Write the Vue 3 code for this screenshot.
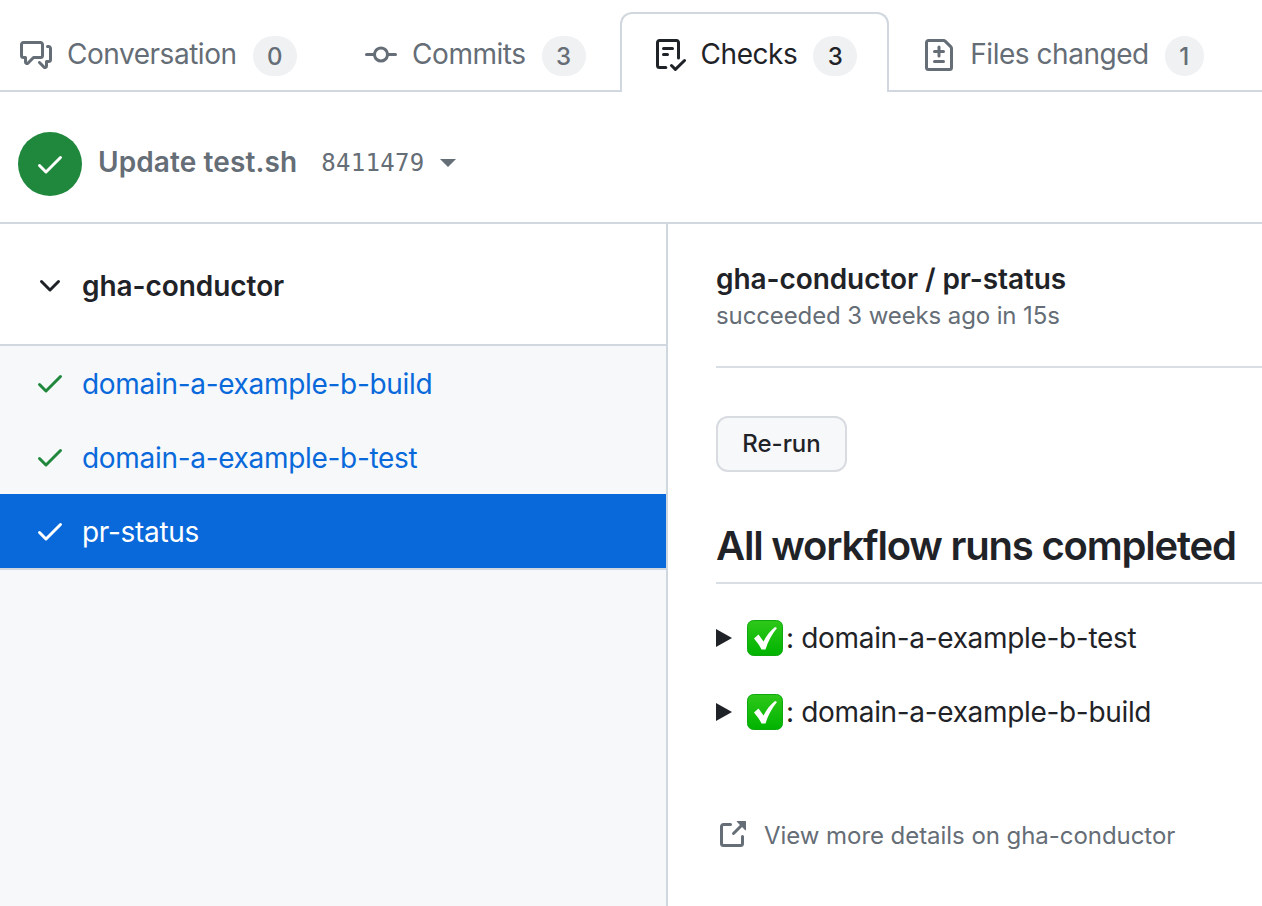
<script setup>
const icons = {
  comment: 'M1.75 1h8.5c.966 0 1.75.784 1.75 1.75v5.5A1.75 1.75 0 0 1 10.25 10H7.061l-2.574 2.573A1.458 1.458 0 0 1 2 11.543V10h-.25A1.75 1.75 0 0 1 0 8.25v-5.5C0 1.784.784 1 1.75 1ZM1.5 2.75v5.5c0 .138.112.25.25.25h1a.75.75 0 0 1 .75.75v2.19l2.72-2.72a.749.749 0 0 1 .53-.22h3.5a.25.25 0 0 0 .25-.25v-5.5a.25.25 0 0 0-.25-.25h-8.5a.25.25 0 0 0-.25.25Zm13 2a.25.25 0 0 0-.25-.25h-.5a.75.75 0 0 1 0-1.5h.5c.966 0 1.75.784 1.75 1.75v5.5A1.75 1.75 0 0 1 14.25 12H14v1.543a1.458 1.458 0 0 1-2.487 1.03L9.22 12.28a.749.749 0 0 1 .326-1.275.749.749 0 0 1 .734.215l2.22 2.22v-2.19a.75.75 0 0 1 .75-.75h1a.25.25 0 0 0 .25-.25Z',
  commit: 'M11.93 8.5a4.002 4.002 0 0 1-7.86 0H.75a.75.75 0 0 1 0-1.5h3.32a4.002 4.002 0 0 1 7.86 0h3.32a.75.75 0 0 1 0 1.5Zm-1.43-.75a2.5 2.5 0 1 0-5 0 2.5 2.5 0 0 0 5 0Z',
  checklist: 'M2.5 1.75v11.5c0 .138.112.25.25.25h3.17a.75.75 0 0 1 0 1.5H2.75A1.75 1.75 0 0 1 1 13.25V1.75C1 .784 1.784 0 2.75 0h8.5C12.216 0 13 .784 13 1.75v7.736a.75.75 0 0 1-1.5 0V1.75a.25.25 0 0 0-.25-.25h-8.5a.25.25 0 0 0-.25.25Zm13.274 9.537v-.001l-4.557 4.45a.75.75 0 0 1-1.055-.008l-1.943-1.95a.75.75 0 0 1 1.062-1.058l1.419 1.425 4.026-3.932a.75.75 0 1 1 1.048 1.074ZM4.75 4h4.5a.75.75 0 0 1 0 1.5h-4.5a.75.75 0 0 1 0-1.5ZM4 7.75A.75.75 0 0 1 4.75 7h2a.75.75 0 0 1 0 1.5h-2A.75.75 0 0 1 4 7.75Z',
  diff: 'M1 1.75C1 .784 1.784 0 2.75 0h7.586c.464 0 .909.184 1.237.513l2.914 2.914c.329.328.513.773.513 1.237v9.586A1.75 1.75 0 0 1 13.25 16H2.75A1.75 1.75 0 0 1 1 14.25Zm1.75-.25a.25.25 0 0 0-.25.25v12.5c0 .138.112.25.25.25h10.5a.25.25 0 0 0 .25-.25V4.664a.25.25 0 0 0-.073-.177l-2.914-2.914a.25.25 0 0 0-.177-.073ZM8 3.25a.75.75 0 0 1 .75.75v1.5h1.5a.75.75 0 0 1 0 1.5h-1.5v1.5a.75.75 0 0 1-1.5 0V7h-1.5a.75.75 0 0 1 0-1.5h1.5V4A.75.75 0 0 1 8 3.25Zm-3 8a.75.75 0 0 1 .75-.75h4.5a.75.75 0 0 1 0 1.5h-4.5a.75.75 0 0 1-.75-.75Z',
  check: 'M13.78 4.22a.75.75 0 0 1 0 1.06l-7.25 7.25a.75.75 0 0 1-1.06 0L2.22 9.28a.751.751 0 0 1 .018-1.042.751.751 0 0 1 1.042-.018L6 10.94l6.72-6.72a.75.75 0 0 1 1.06 0Z',
  chevron: 'M12.78 5.22a.749.749 0 0 1 0 1.06l-4.25 4.25a.749.749 0 0 1-1.06 0L3.22 6.28a.749.749 0 1 1 1.06-1.06L8 8.939l3.72-3.719a.749.749 0 0 1 1.06 0Z',
  external: 'M3.75 2h3.5a.75.75 0 0 1 0 1.5h-3.5a.25.25 0 0 0-.25.25v8.5c0 .138.112.25.25.25h8.5a.25.25 0 0 0 .25-.25v-3.5a.75.75 0 0 1 1.5 0v3.5A1.75 1.75 0 0 1 12.25 14h-8.5A1.75 1.75 0 0 1 2 12.25v-8.5C2 2.784 2.784 2 3.75 2Zm6.854-1h4.146a.25.25 0 0 1 .25.25v4.146a.25.25 0 0 1-.427.177L13.03 4.03 9.28 7.78a.751.751 0 0 1-1.042-.018.751.751 0 0 1-.018-1.042l3.75-3.75-1.543-1.543A.25.25 0 0 1 10.604 1Z'
}
const tabs = [
  { label: 'Conversation', count: 0, icon: 'comment' },
  { label: 'Commits', count: 3, icon: 'commit' },
  { label: 'Checks', count: 3, icon: 'checklist', active: true },
  { label: 'Files changed', count: 1, icon: 'diff' }
]
const jobs = [
  { name: 'domain-a-example-b-build' },
  { name: 'domain-a-example-b-test' },
  { name: 'pr-status', active: true }
]
const runs = ['domain-a-example-b-test', 'domain-a-example-b-build']
</script>

<template>
  <div class="page">
    <nav class="tabs">
      <a v-for="t in tabs" :key="t.label" class="tab" :class="{ active: t.active }">
        <svg class="tab-icon" viewBox="0 0 16 16" fill="currentColor"><path :d="icons[t.icon]" /></svg>
        <span class="tab-label">{{ t.label }}</span>
        <span class="counter">{{ t.count }}</span>
      </a>
    </nav>

    <header class="commit-bar">
      <span class="status-circle">
        <svg viewBox="0 0 16 16" fill="#fff"><path :d="icons.check" /></svg>
      </span>
      <strong class="commit-title">Update test.sh</strong>
      <span class="sha">8411479</span>
      <span class="caret"></span>
    </header>

    <div class="body">
      <aside class="side">
        <div class="suite">
          <svg class="chevron" viewBox="0 0 16 16" fill="#1f2328"><path :d="icons.chevron" /></svg>
          <span>gha-conductor</span>
        </div>
        <ul class="jobs">
          <li v-for="j in jobs" :key="j.name" class="job" :class="{ active: j.active }">
            <svg class="job-check" viewBox="0 0 16 16" fill="currentColor"><path :d="icons.check" /></svg>
            <span class="job-name">{{ j.name }}</span>
          </li>
        </ul>
      </aside>

      <main class="detail">
        <div class="detail-head">
          <div class="detail-title">gha-conductor / pr-status</div>
          <div class="detail-sub">succeeded 3 weeks ago in 15s</div>
        </div>
        <button class="rerun" type="button"><span>Re-run</span></button>
        <h2 class="heading">All workflow runs completed</h2>
        <div class="runs">
          <div v-for="r in runs" :key="r" class="run">
            <span class="arrow"></span>
            <svg class="emoji" viewBox="0 0 36 36">
              <defs>
                <linearGradient id="g" x1="0" y1="0" x2="0" y2="1">
                  <stop offset="0" stop-color="#2ec81a" />
                  <stop offset="1" stop-color="#00b300" />
                </linearGradient>
              </defs>
              <rect x="0.5" y="0.5" width="35" height="35" rx="6" fill="url(#g)" stroke="#0fa80f" />
              <path d="M7 18.5l4.5-4 5 7C19.5 15.5 23.5 10.5 28 7l2 1C25 14 21 21.500 18.500 29.500h-4C12.500 25.500 10 22 7 18.500Z" fill="#fff" />
            </svg>
            <span class="run-text">: {{ r }}</span>
          </div>
        </div>
        <a class="more">
          <svg class="more-icon" viewBox="0 0 16 16" fill="currentColor"><path :d="icons.external" /></svg>
          <span>View more details on gha-conductor</span>
        </a>
      </main>
    </div>
  </div>
</template>

<style>
html, body { margin: 0; background: #fff; }
</style>

<style scoped>
.page {
  width: 1262px;
  height: 906px;
  overflow: hidden;
  font-family: Inter, "Liberation Sans", sans-serif;
  color: #1f2328;
  display: flex;
  flex-direction: column;
}
.tabs {
  height: 92px;
  box-sizing: border-box;
  padding-top: 12px;
  margin-left: -14px;
  width: 1276px;
  border-bottom: 2px solid #d0d7de;
  display: flex;
  flex: none;
}
.tab {
  height: 80px;
  box-sizing: border-box;
  border: 2px solid transparent;
  border-bottom: 0;
  border-radius: 12px 12px 0 0;
  padding: 4px 32px 0;
  display: flex;
  align-items: center;
  color: #656d76;
  font-size: 28px;
  letter-spacing: -0.47px;
  white-space: nowrap;
}
.tab.active {
  border-color: #d0d7de;
  background: #fff;
  color: #1f2328;
  padding-right: 30px;
}
.tab-icon { width: 32px; height: 32px; margin-right: 15px; flex: none; }
.tab-label { margin-top: -2px; }
.counter {
  margin-left: 16px;
  margin-top: 2px;
  padding: 0 14.5px;
  height: 40px;
  border-radius: 20px;
  background: #eff1f3;
  display: flex;
  align-items: center;
  justify-content: center;
  font-size: 24px;
  font-weight: 500;
  letter-spacing: 0;
}
.commit-bar {
  height: 132px;
  box-sizing: border-box;
  border-bottom: 2px solid #d0d7de;
  padding: 14px 0 0 18px;
  display: flex;
  align-items: center;
  flex: none;
}
.status-circle {
  width: 64px;
  height: 64px;
  border-radius: 50%;
  background: #1f883d;
  display: flex;
  align-items: center;
  justify-content: center;
  flex: none;
}
.status-circle svg { width: 32px; height: 32px; }
.commit-title {
  margin: -4px 0 0 16px;
  font-size: 28px;
  font-weight: 600;
  letter-spacing: 0.1px;
  color: #656d76;
}
.sha {
  margin: -2px 0 0 24px;
  font-family: "DejaVu Sans Mono", "Liberation Mono", monospace;
  font-size: 24px;
  letter-spacing: 0.3px;
  color: #656d76;
}
.caret {
  margin: -2px 0 0 16px;
  border: 8px solid transparent;
  border-top-color: #656d76;
  border-bottom: 0;
}
.body { flex: 1; display: flex; min-height: 0; }
.side {
  width: 668px;
  flex: none;
  box-sizing: border-box;
  border-right: 2px solid #d0d7de;
  background: #f6f8fa;
}
.suite {
  height: 122px;
  box-sizing: border-box;
  padding: 4px 0 0 34px;
  background: #fff;
  border-bottom: 2px solid #d0d7de;
  display: flex;
  align-items: center;
  font-size: 28px;
  font-weight: 600;
  letter-spacing: -0.06px;
}
.chevron { width: 32px; height: 32px; margin-right: 16px; flex: none; }
.jobs { list-style: none; margin: 0; padding: 0; }
.job {
  height: 74px;
  box-sizing: border-box;
  padding-left: 34px;
  display: flex;
  align-items: center;
  font-size: 28px;
  letter-spacing: -0.31px;
  color: #1f883d;
}
.job-name { color: #0969da; margin-top: 2px; }
.job-check { width: 32px; height: 32px; margin-right: 16px; flex: none; }
.job.active {
  background: #0969da;
  color: #fff;
  height: 76px;
  border-bottom: 2px solid #d0d7de;
}
.job.active .job-name { color: #fff; }
.detail { flex: 1; min-width: 0; padding-left: 48px; }
.detail-head {
  height: 144px;
  box-sizing: border-box;
  padding-top: 38px;
  border-bottom: 2px solid #d8dee4;
}
.detail-title {
  font-size: 28px;
  line-height: 34px;
  font-weight: 600;
  letter-spacing: -0.08px;
}
.detail-sub {
  margin-top: 5px;
  font-size: 24px;
  line-height: 30px;
  letter-spacing: -0.11px;
  color: #656d76;
}
.rerun {
  display: block;
  margin: 48px 0 0;
  width: 131px;
  height: 56px;
  border: 2px solid #d8dbe0;
  border-radius: 12px;
  background: #f6f8fa;
  font-family: inherit;
  font-size: 24px;
  font-weight: 500;
  letter-spacing: -0.05px;
  color: #1f2328;
  padding: 0 0 2px;
}
.heading {
  margin: 48px 0 0;
  font-size: 40px;
  line-height: 52px;
  font-weight: 600;
  letter-spacing: -1.2px;
  height: 64px;
  box-sizing: border-box;
  border-bottom: 2px solid #d8dee4;
}
.runs { margin-top: 17px; }
.run {
  height: 74px;
  display: flex;
  align-items: center;
  font-size: 28px;
  letter-spacing: -0.33px;
}
.arrow {
  border-style: solid;
  border-width: 9px 0 9px 16px;
  border-color: transparent transparent transparent #1f2328;
  margin-right: 14px;
  flex: none;
}
.emoji { width: 36px; height: 36px; flex: none; margin: 0 3px 0 1px; }
.more {
  margin-top: 70px;
  display: flex;
  align-items: center;
  color: #656d76;
  font-size: 24px;
  letter-spacing: -0.05px;
}
.more-icon { width: 32px; height: 32px; margin-right: 16px; flex: none; }
</style>
